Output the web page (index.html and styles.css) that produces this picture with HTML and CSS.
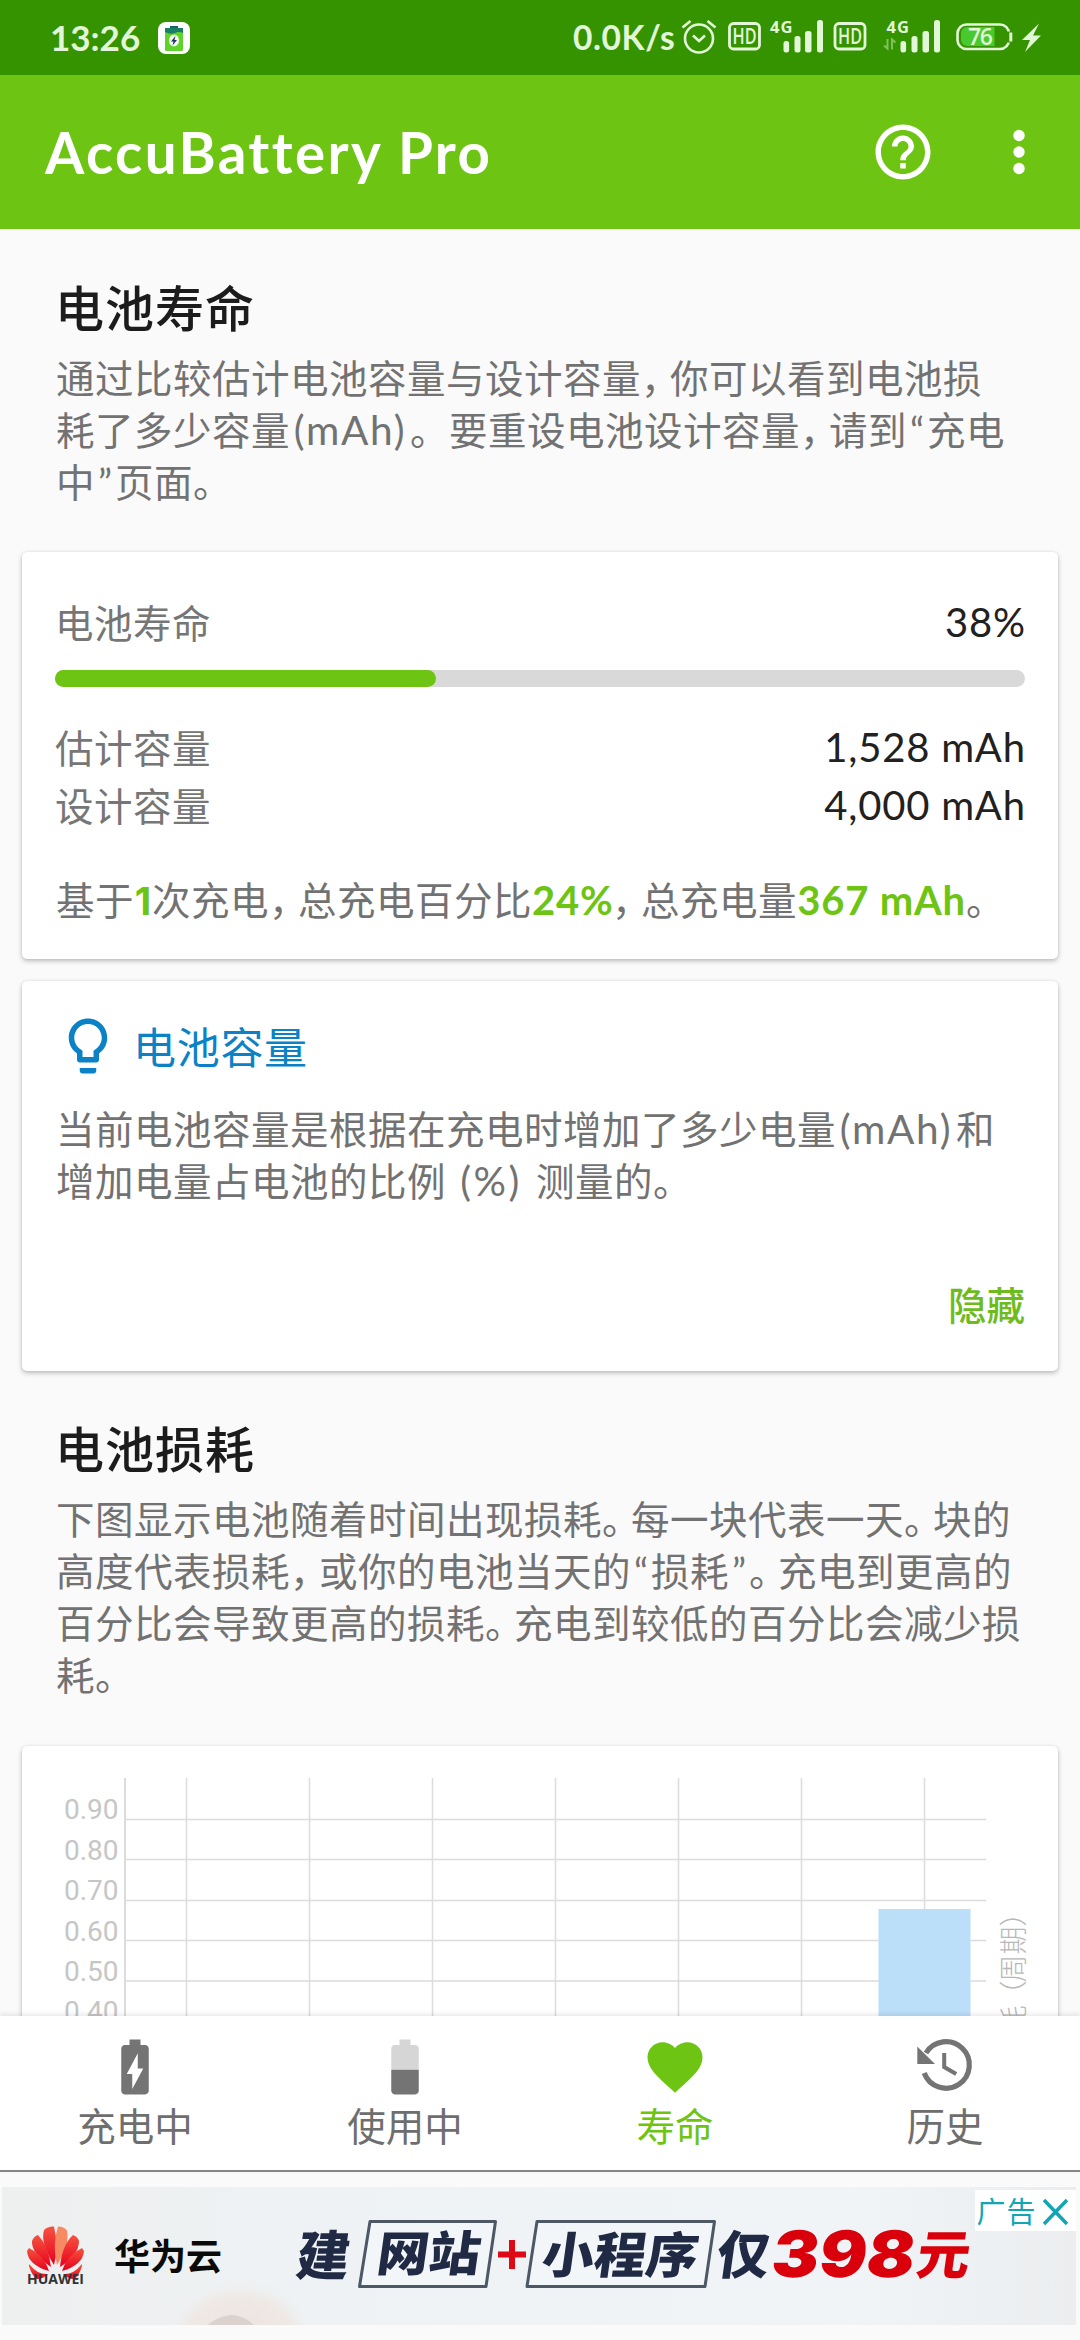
FILE: index.html
```html
<!DOCTYPE html>
<html lang="zh-CN">
<head>
<meta charset="utf-8">
<title>AccuBattery Pro</title>
<link rel="stylesheet" href="styles.css">
</head>
<body>
<div class="screen">
  <header class="status">
    <span class="clock">13:26</span>
    <svg class="notif" viewBox="0 0 32 32">
      <rect width="32" height="32" rx="8" fill="#fff"/>
      <rect x="12" y="4" width="8" height="4" fill="#17656a"/>
      <rect x="7" y="6" width="18" height="23" rx="1.500" fill="#5fd32c"/>
      <path d="M7 6h18v5q-4-2-8 0t-10-1z" fill="#1b7f68"/>
      <ellipse cx="16" cy="18.500" rx="5" ry="6" fill="#f2fbe9"/>
      <path d="M17.500 14l-4.500 5.500h2.500l-1 4 4.500-5.500h-2.500z" fill="#23306b"/>
    </svg>
    <span class="speed">0.0K/s</span>
    <svg class="sicons" viewBox="680 0 366 75" fill="none" stroke="#e2f7d8">
      <circle cx="699" cy="38.500" r="14" stroke-width="2.600"/>
      <path d="M693 35.500l6 5.500 6-5.500M682.500 27.500l8-6.500M715.500 27.500l-8-6.500" stroke-width="2.600"/>
      <rect x="729.500" y="23.500" width="30" height="25.500" rx="4" stroke-width="2.800"/>
      <rect x="835" y="23.500" width="30" height="25.500" rx="4" stroke-width="2.800"/>
      <g fill="#e2f7d8" stroke="none" class="sicon-text">
        <text x="732.500" y="44" font-size="22" textLength="24" lengthAdjust="spacingAndGlyphs">HD</text>
        <text x="838" y="44" font-size="22" textLength="24" lengthAdjust="spacingAndGlyphs">HD</text>
        <text x="770" y="32.500" font-size="16.500" font-weight="700" textLength="22.500">4G</text>
        <text x="886.500" y="32.500" font-size="16.500" font-weight="700" textLength="22.500">4G</text>
        <rect x="783.500" y="41" width="5.600" height="11.500" rx="2.500"/>
        <rect x="794.500" y="36" width="6" height="16.500" rx="2.500"/>
        <rect x="805" y="31" width="6.500" height="21.500" rx="2.500"/>
        <rect x="817" y="20" width="6" height="32.500" rx="2.500"/>
        <rect x="900.500" y="41" width="5.600" height="11.500" rx="2.500"/>
        <rect x="911.500" y="36" width="6" height="16.500" rx="2.500"/>
        <rect x="922.500" y="31" width="6.500" height="21.500" rx="2.500"/>
        <rect x="934" y="20" width="6" height="32.500" rx="2.500"/>
      </g>
      <path d="M887.500 39v9.500l-3.500-3M892 49.500v-10l3.500 3" stroke="#7fc25c" stroke-width="2"/>
      <rect x="957.500" y="24.500" width="51.500" height="24.500" rx="9" stroke-width="2.600"/>
      <path d="M961 34q0-7 7-7h26.500v19H968q-7 0-7-7z" fill="#48c92d" stroke="none"/>
      <path d="M1009 31.500v11" stroke="#359300" stroke-width="5"/>
      <path d="M1010.800 32.500v9" stroke-width="3"/>
      <text x="968" y="45" font-size="23" fill="#e2f7d8" stroke="none" class="sicon-text" textLength="25">76</text>
      <path d="M1039 23.500l-17 16.500h8l-5 12 16-16.500h-8z" fill="#e2f7d8" stroke="none"/>
    </svg>
  </header>

  <div class="appbar">
    <h1 class="app-title">AccuBattery Pro</h1>
    <svg class="help" viewBox="0 0 24 24"><path fill="#fff" d="M11 18h2v-2h-2v2zm1-16C6.480 2 2 6.480 2 12s4.480 10 10 10 10-4.480 10-10S17.520 2 12 2zm0 18c-4.410 0-8-3.590-8-8s3.590-8 8-8 8 3.590 8 8-3.590 8-8 8zm0-14c-2.210 0-4 1.790-4 4h2c0-1.100.9-2 2-2s2 .9 2 2c0 2-3 1.750-3 5h2c0-2.250 3-2.500 3-5 0-2.210-1.790-4-4-4z"/></svg>
    <svg class="more" viewBox="0 0 24 66" fill="#fff"><circle cx="12" cy="16.500" r="5.700"/><circle cx="12" cy="33" r="5.700"/><circle cx="12" cy="49.500" r="5.700"/></svg>
  </div>

  <main class="content">
    <section class="intro intro-life">
      <h2>电池寿命</h2>
      <p>通过比较估计电池容量与设计容量<i>，</i>你可以看到电池损<br>耗了多少容量<span class="unit">(mAh)</span>。要重设电池设计容量<i>，</i>请到<q>“</q>充电<br>中<q>”</q>页面。</p>
    </section>

    <section class="card card-life">
      <div class="row"><span>电池寿命</span><b class="pct">38%</b></div>
      <div class="bar"><div class="fill"></div></div>
      <div class="row row-cap"><span>估计容量</span><b>1,528 mAh</b></div>
      <div class="row row-cap"><span>设计容量</span><b>4,000 mAh</b></div>
      <p class="summary">基于<em class="n1">1</em>次充电<i>，</i>总充电百分比<em class="n2">24%</em><i>，</i>总充电量<em class="n3">367 mAh</em>。</p>
    </section>

    <section class="card card-tip">
      <div class="tip-head">
        <svg viewBox="0 0 24 24"><path fill="#0b82c6" d="M9 21c0 .55.45 1 1 1h4c.55 0 1-.45 1-1v-1H9v1zm3-19C8.140 2 5 5.140 5 9c0 2.380 1.190 4.470 3 5.740V17c0 .55.45 1 1 1h6c.55 0 1-.45 1-1v-2.260c1.810-1.270 3-3.360 3-5.740 0-3.860-3.140-7-7-7zm2.850 11.100l-.85.6V16h-4v-2.300l-.85-.6C7.800 12.160 7 10.630 7 9c0-2.760 2.240-5 5-5s5 2.240 5 5c0 1.630-.8 3.160-2.150 4.100z"/></svg>
        <h3>电池容量</h3>
      </div>
      <p>当前电池容量是根据在充电时增加了多少电量<span class="unit">(mAh)</span>和<br>增加电量占电池的比例<span class="ratio">(%)</span>测量的。</p>
      <div class="hide">隐藏</div>
    </section>

    <section class="intro intro-wear">
      <h2>电池损耗</h2>
      <p>下图显示电池随着时间出现损耗<i>。</i>每一块代表一天<i>。</i>块的<br>高度代表损耗<i>，</i>或你的电池当天的<q>“</q>损耗<q>”</q><i>。</i>充电到更高的<br>百分比会导致更高的损耗<i>。</i>充电到较低的百分比会减少损<br>耗。</p>
    </section>

    <section class="card card-chart">
      <svg class="chart" viewBox="22 1746 1036 300">
        <g stroke="#dcdcdc" stroke-width="1.500">
          <path d="M125 1778V2046" stroke-width="2"/>
          <path d="M186.500 1778V2046M309.500 1778V2046M432.500 1778V2046M555.500 1778V2046M678.500 1778V2046M801.500 1778V2046M924.500 1778V2046"/>
          <path d="M125 1819.500H986M125 1859.500H986M125 1900.500H986M125 1940.500H986M125 1981H986M125 2021.500H986"/>
        </g>
        <rect x="878.500" y="1909" width="92" height="140" fill="#bbdef9"/>
        <g class="tick" text-anchor="end">
          <text x="118.500" y="1819">0.90</text>
          <text x="118.500" y="1859.500">0.80</text>
          <text x="118.500" y="1899.500">0.70</text>
          <text x="118.500" y="1940.500">0.60</text>
          <text x="118.500" y="1980.500">0.50</text>
          <text x="118.500" y="2021">0.40</text>
        </g>
        <g class="axis" transform="translate(1023.500 2033.500) rotate(-90)">
          <text x="0" y="0">耗</text><text x="25" y="0">（</text><text x="51" y="0">周</text><text x="79" y="0">期</text><text x="107" y="0">）</text>
        </g>
      </svg>
    </section>
  </main>

  <nav class="tabs">
    <div class="tab">
      <svg viewBox="0 0 24 24"><path fill="#747474" d="M15.670 4H14V2h-4v2H8.330C7.600 4 7 4.600 7 5.330v15.330C7 21.400 7.600 22 8.330 22h7.330c.74 0 1.340-.6 1.340-1.330V5.330C17 4.600 16.400 4 15.670 4zM11 20v-5.500H9L13 7v5.500h2L11 20z"/></svg>
      <span>充电中</span>
    </div>
    <div class="tab">
      <svg viewBox="0 0 24 24"><path fill="#d6d6d6" d="M17 5.330C17 4.600 16.400 4 15.670 4H14V2h-4v2H8.330C7.600 4 7 4.600 7 5.330V13h10V5.330z"/><path fill="#747474" d="M7 13v7.670C7 21.400 7.600 22 8.330 22h7.330c.74 0 1.340-.6 1.340-1.330V13H7z"/></svg>
      <span>使用中</span>
    </div>
    <div class="tab active">
      <svg viewBox="0 0 24 24"><path fill="#6ec412" d="M12 21.350l-1.450-1.320C5.400 15.360 2 12.280 2 8.500 2 5.420 4.420 3 7.500 3c1.740 0 3.410.81 4.500 2.090C13.090 3.810 14.760 3 16.500 3 19.580 3 22 5.420 22 8.500c0 3.780-3.400 6.860-8.550 11.540L12 21.350z"/></svg>
      <span>寿命</span>
    </div>
    <div class="tab">
      <svg viewBox="0 0 66 66"><path d="M12.200 39A23.300 23.300 0 1 0 14 19" fill="none" stroke="#747474" stroke-width="5.200"/><path d="M5.300 12.500V30H23z" fill="#747474"/><path d="M32.200 19v14l12 7" fill="none" stroke="#747474" stroke-width="4"/></svg>
      <span>历史</span>
    </div>
  </nav>

  <aside class="ad">
    <svg viewBox="0 0 1080 138">
      <defs>
        <linearGradient id="petal" x1="0" y1="0" x2="0" y2="1"><stop offset="0" stop-color="#f5533f"/><stop offset="1" stop-color="#e8001d"/></linearGradient>
        <linearGradient id="adbg" x1="0" y1="0" x2="1" y2="0"><stop offset="0" stop-color="#eeefef"/><stop offset=".25" stop-color="#eef2f4"/><stop offset=".8" stop-color="#f0f4f6"/><stop offset="1" stop-color="#ebedef"/></linearGradient>
        <radialGradient id="blush"><stop offset="0" stop-color="#ebe2dd"/><stop offset=".7" stop-color="#efe9e6"/><stop offset="1" stop-color="#eef1f3" stop-opacity="0"/></radialGradient>
      </defs>
      <rect x="2" width="1074" height="138" fill="url(#adbg)"/>
      <ellipse cx="240" cy="150" rx="76" ry="58" fill="url(#blush)"/>
      <path d="M208 138q24-20 46 0z" fill="#dbd1cd"/>
      <g fill="url(#petal)">
        <path d="M54 78Q40 56 44 43q4-4 10-3.500Q59 60 54 78z"/>
        <path d="M57 78Q52 58 58 39.500q6 0 9 4Q70 58 57 78z" fill="#f58a63"/>
        <path d="M51 80Q31 66 32 54q2-5 6-6 10 10 13 32z"/>
        <path d="M60 80Q62 58 73 48q5 2 6 6 0 14-19 26z"/>
        <path d="M49 84Q28 78 27 64l2-3q15 7 20 23z"/>
        <path d="M62 84q5-16 20-23l2 3q-1 14-22 20z"/>
        <path d="M48 87q-10 1-18-9-1-2-1 1 3 10 8 13 6 0 11-5z"/>
        <path d="M63 87q10 1 18-9 1-2 1 1-3 10-8 13-6 0-11-5z"/>
      </g>
      <text x="27" y="97" class="latin" font-size="13.500" textLength="57" lengthAdjust="spacingAndGlyphs">HUAWEI</text>
      <text x="114" y="83" class="brand" font-size="36" textLength="108">华为云</text>
      <g fill="#f3f6f8" stroke="#4c5866" stroke-width="3" stroke-linejoin="round">
        <path d="M370 34.500H495.500L486 99.500H359.500z"/>
        <path d="M537 34.500H714.500L705 99.500H527z"/>
      </g>
      <path d="M512 53v29M498 67.500h28" stroke="#dd0a16" stroke-width="6"/>
      <g class="slogan" transform="skewX(-8)">
        <text x="307" y="88" font-size="53" textLength="54">建</text>
        <text x="387" y="84" font-size="48" textLength="103" lengthAdjust="spacingAndGlyphs">网站</text>
        <text x="552" y="86" font-size="49" textLength="156" lengthAdjust="spacingAndGlyphs">小程序</text>
        <text x="727" y="87" font-size="52" textLength="52">仅</text>
        <text x="782" y="90" font-size="64" class="price" textLength="143" lengthAdjust="spacingAndGlyphs">398</text>
        <text x="927" y="87" font-size="53" class="price cjk" textLength="54">元</text>
      </g>
      <rect x="975" y="3" width="101" height="41" fill="#fff"/>
      <text x="976.500" y="35.500" font-size="29" class="tag" textLength="59">广告</text>
      <path d="M1044 13l23 24M1067 13l-23 24" stroke="#12a5b5" stroke-width="3.500"/>
    </svg>
  </aside>
</div>
</body>
</html>
```
FILE: styles.css
```css
* { box-sizing: border-box; }
body {
  margin: 0;
  background: #fafafa;
  font-family: Lato, "Noto Sans CJK SC", sans-serif;
}
h1, h2, h3, p { margin: 0; }
svg { display: block; flex: none; }
.screen {
  width: 1080px;
  height: 2340px;
  display: flex;
  flex-direction: column;
  overflow: hidden;
}

/* system status bar */
.status {
  height: 75px;
  flex: none;
  background: #359300;
  display: flex;
  align-items: center;
  padding: 0 34px 0 50px;
  color: #e2f7d8;
}
.clock { font-size: 35px; font-weight: 700; width: 108px; padding-bottom: 2px; }
.notif { width: 32px; height: 32px; }
.speed { margin-left: auto; width: 107px; padding-bottom: 2px; font-size: 33.500px; font-weight: 700; letter-spacing: .6px; white-space: nowrap; }
.sicons { width: 366px; height: 75px; }
.sicon-text { font-family: "Open Sans", sans-serif; font-weight: 600; }

/* app bar */
.appbar {
  height: 154px;
  flex: none;
  background: #6ec412;
  display: flex;
  align-items: center;
  padding: 0 49px 0 45px;
}
.app-title {
  flex: 1;
  color: #fff;
  font-size: 56.500px;
  font-weight: 700;
  letter-spacing: 2.400px;
  white-space: nowrap;
}
.help { width: 66px; height: 66px; margin-right: 71px; }
.more { width: 24px; height: 66px; }

/* scrolling page */
.content { height: 1787px; flex: none; overflow: hidden; }
.intro { padding: 0 0 0 55px; }
.intro-life { height: 323px; padding-top: 46px; }
.intro-wear { height: 375px; padding-top: 45px; }
.intro h2 {
  font-size: 49px;
  font-weight: 500;
  letter-spacing: 1px;
  line-height: 66px;
  color: #1c1c1c;
}
.intro p { margin: 11px 0 0 1px; }
p {
  font-size: 38.500px;
  letter-spacing: .5px;
  line-height: 52px;
  color: #727272;
  white-space: nowrap;
}
p i { font-style: normal; letter-spacing: -9.500px; }
p q { quotes: none; display: inline-block; width: 20px; text-align: center; letter-spacing: 0; }
.unit { display: inline-block; width: 120px; text-align: center; font-size: 40.500px; line-height: 48px; letter-spacing: 1.700px; }
.ratio { display: inline-block; width: 90px; text-align: center; font-size: 40.500px; line-height: 48px; letter-spacing: 2.500px; }

.card {
  margin: 0 22px;
  padding: 0 33px;
  background: #fff;
  border-radius: 5px;
  box-shadow: 0 2px 5px rgba(0, 0, 0, .26), 0 0 2px rgba(0, 0, 0, .08);
}
.card-life { height: 407px; padding-top: 41px; }
.row {
  display: flex;
  justify-content: space-between;
  align-items: center;
  height: 58px;
  font-size: 38.500px;
  letter-spacing: .5px;
  color: #767676;
}
.row b { font-size: 40px; font-weight: 400; color: #212121; letter-spacing: .8px; margin-right: -.8px; }
.row span { padding: 0 0 2px 0; }
.bar { height: 17px; margin: 19px 0 31px; border-radius: 9px; background: #d9d9d9; }
.fill { width: 39.300%; height: 17px; border-radius: 9px; background: #6ec412; }
.summary { margin: 40px 0 0 1px; }
.summary em { font-style: normal; font-weight: 700; color: #6ec412; display: inline-block; text-align: center; font-size: 40px; line-height: 48px; letter-spacing: .8px; }
.summary .n1 { width: 18px; font-family: Inter, sans-serif; font-size: 38px; letter-spacing: 0; }
.n2 { width: 80px; }
.n3 { width: 169px; }

.card-tip { height: 390px; margin-top: 22px; padding-top: 32px; }
.tip-head { display: flex; align-items: center; height: 66px; }
.tip-head svg { width: 66px; height: 66px; }
.tip-head h3 { margin: -2px 0 0 12px; font-size: 43px; letter-spacing: .7px; font-weight: 400; color: #0b82c6; }
.card-tip p { margin: 24px 0 0 1px; }
.hide { margin-top: 72px; text-align: right; font-size: 38.500px; line-height: 52px; font-weight: 500; color: #6ebb1e; }

.card-chart { height: 320px; padding: 0; }
.chart { width: 1036px; height: 300px; }
.tick { font: 28px Roboto, sans-serif; fill: #c6c6c6; }
.axis { font: 28px "Noto Sans CJK SC", sans-serif; font-weight: 300; fill: #b8b8b8; }

/* bottom navigation */
.tabs {
  position: relative;
  height: 156px;
  flex: none;
  display: flex;
  background: #fff;
  border-bottom: 2px solid #868686;
  box-shadow: 0 -2px 5px rgba(0, 0, 0, .09);
}
.tab { flex: 1; display: flex; flex-direction: column; align-items: center; padding-top: 18px; color: #6e6e6e; }
.tab svg { width: 66px; height: 66px; }
.tab span { font-size: 38.500px; line-height: 52px; }
.tab.active { color: #6ec412; }

/* banner */
.ad { padding-top: 15px; flex: none; }
.ad svg { width: 1080px; height: 138px; }
.latin { font-family: "Open Sans", sans-serif; font-weight: 700; fill: #333; }
.brand { font-family: "Noto Sans CJK SC", sans-serif; font-weight: 700; fill: #0a0a0a; }
.slogan { font-family: "Noto Sans CJK SC", sans-serif; font-weight: 900; fill: #202a44; }
.price { font-family: Inter, sans-serif; font-weight: 900; fill: #d9000b; }
.price.cjk { font-family: "Noto Sans CJK SC", sans-serif; }
.tag { font-family: "Noto Sans CJK SC", sans-serif; fill: #12a5b5; }
```
